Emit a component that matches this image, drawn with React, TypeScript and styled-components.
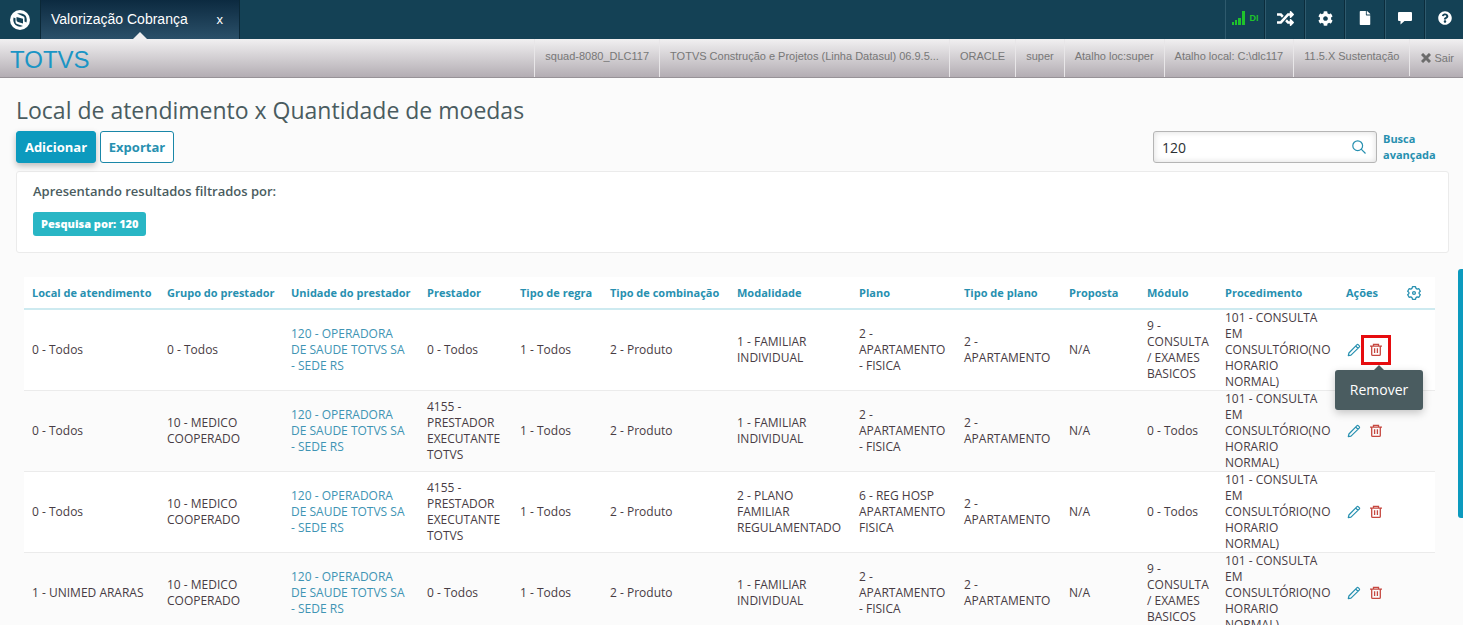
import React from "react";
import styled, { createGlobalStyle } from "styled-components";
import { FaRandom, FaCog, FaFile, FaQuestionCircle } from "react-icons/fa";

const UI = '"Open Sans", "Noto Sans", sans-serif';
const SYS = '"Liberation Sans", Arial, sans-serif';

const GlobalStyle = createGlobalStyle`
  * { box-sizing: border-box; }
  body { margin: 0; background: #fbfbfb; font-family: ${UI}; color: #4a5c60; }
  button, input { font-family: inherit; margin: 0; }
  a { text-decoration: none; }
`;

const Page = styled.div`
  height: 100vh;
  overflow: hidden;
  position: relative;
  display: flex;
  flex-direction: column;
`;

const TopBar = styled.header`
  flex: none;
  display: flex;
  height: 39px;
  background: #144155;
  font-family: ${SYS};
  color: #fff;
`;

const Home = styled.button`
  width: 40px;
  border: 0;
  padding: 0;
  background: none;
  display: flex;
  align-items: center;
  justify-content: center;
`;

const Tab = styled.div`
  position: relative;
  width: 200px;
  display: flex;
  align-items: center;
  justify-content: space-between;
  padding: 0 16px 1px 10px;
  border-left: 1px solid #0b2837;
  border-right: 1px solid #0b2837;
  background: linear-gradient(#0c2a40, #2b5069);
  font-size: 14px;
  &::after {
    content: "";
    position: absolute;
    bottom: 0;
    left: 50%;
    margin-left: -7px;
    border: 7px solid transparent;
    border-top: 0;
    border-bottom-color: #f0eff0;
  }
`;

const TabClose = styled.button`
  border: 0;
  padding: 0;
  background: none;
  color: #fff;
  font-size: 13px;
`;

const Tools = styled.nav`
  margin-left: auto;
  margin-right: -2px;
  display: flex;
`;

const Tool = styled.button`
  width: 40px;
  padding: 0 0 3px;
  border: 0;
  border-left: 1px solid #2f5a6d;
  border-right: 1px solid #0b2c3c;
  background: none;
  color: #fff;
  display: flex;
  align-items: center;
  justify-content: center;
  gap: 4px;
`;

const Signal = styled.span`
  color: #1fc32b;
  font-size: 9px;
  font-weight: 700;
`;

const InfoBar = styled.div`
  flex: none;
  display: flex;
  height: 39px;
  background: linear-gradient(#f1f0f1, #b3adb3);
  border-bottom: 1px solid #979297;
  font-family: ${SYS};
  font-size: 11px;
  line-height: 16px;
  color: #777;
`;

const Brand = styled.div`
  flex: 1;
  padding-left: 10px;
  font-size: 24px;
  line-height: 42px;
  color: #1b95c5;
`;

const Info = styled.div`
  padding: 9px 10px 0;
  border-left: 1px solid #e8e6e8;
  white-space: nowrap;
`;

const Exit = styled.a`
  display: flex;
  gap: 3px;
  align-items: center;
  height: 37px;
  padding: 0 9px 0 11px;
  border-left: 1px solid #e8e6e8;
  color: #777;
`;

const Main = styled.main`
  flex: none;
  padding: 16px 14px 0 16px;
`;

const Title = styled.h1`
  margin: 0;
  font-size: 23px;
  line-height: 32px;
  font-weight: 400;
  color: #4a5c60;
`;

const Actions = styled.div`
  display: flex;
  gap: 4px;
  margin-top: 5px;
  padding-right: 10px;
  height: 32px;
`;

const Button = styled.button<{ $primary?: boolean }>`
  width: ${(p) => (p.$primary ? 80 : 74)}px;
  padding: 0;
  border: 1px solid ${(p) => (p.$primary ? "#0c9abe" : "#1a87a8")};
  border-radius: 3px;
  background: ${(p) => (p.$primary ? "#0c9abe" : "#fff")};
  color: ${(p) => (p.$primary ? "#fff" : "#2790b0")};
  box-shadow: ${(p) => (p.$primary ? "0 3px 6px rgba(0,0,0,.25)" : "none")};
  font-size: 13px;
  font-weight: 700;
`;

const Search = styled.form`
  margin-left: auto;
  display: flex;
  align-items: center;
  width: 224px;
  padding-right: 10px;
  border: 1px solid #b5b5b5;
  border-radius: 3px;
  background: #fff;
  box-shadow: inset 0 0 6px rgba(0, 0, 0, 0.14);
`;

const SearchInput = styled.input`
  flex: 1;
  min-width: 0;
  border: 0;
  outline: 0;
  padding: 0 8px;
  background: none;
  font-size: 14px;
  color: #2c3133;
`;

const IconButton = styled.button<{ $color?: string }>`
  padding: 0;
  border: 0;
  background: none;
  display: flex;
  color: ${(p) => p.$color || "#2790b0"};
`;

const Advanced = styled.a`
  width: 56px;
  margin-left: 2px;
  font-size: 11px;
  line-height: 16px;
  font-weight: 700;
  color: #2790b0;
`;

const Filters = styled.section`
  margin-top: 8px;
  height: 82px;
  padding: 9px 16px;
  border: 1px solid #ebebeb;
  border-radius: 3px;
  background: #fff;
`;

const FilterTitle = styled.div`
  font-size: 13px;
  line-height: 20px;
  font-weight: 600;
`;

const Tag = styled.span`
  display: inline-block;
  margin-top: 11px;
  padding: 0 8px;
  border-radius: 3px;
  background: #29b6c5;
  color: #fff;
  font-size: 11px;
  line-height: 24px;
  font-weight: 800;
`;

const Grid = styled.table`
  width: calc(100% - 22px);
  margin: 24px 0 0 8px;
  table-layout: fixed;
  border-spacing: 0;
  background: #fff;
  font-size: 12px;
  line-height: 16px;
`;

const Head = styled.th`
  height: 33px;
  padding: 0 0 0 8px;
  border-bottom: 2px solid #cdeaf0;
  text-align: left;
  white-space: nowrap;
  font-size: 11px;
  font-weight: 700;
  color: #2790b0;
`;

const Row = styled.tr`
  background: #fff;
  &:nth-child(even) { background: #fbfbfb; }
`;

const Cell = styled.td`
  height: 81px;
  padding: 0 0 0 8px;
  border-bottom: 1px solid #ebebeb;
  white-space: pre;
  color: #483c44;
`;

const UnitLink = styled.a`
  color: #4094b4;
`;

const RowActions = styled.div`
  display: flex;
  align-items: center;
  gap: 8px;
  padding-left: 1px;
`;

const Remove = styled.div<{ $active: boolean }>`
  position: relative;
  outline: ${(p) => (p.$active ? "3px solid #e60c0f" : "none")};
  outline-offset: 5px;
`;

const Tooltip = styled.div`
  position: absolute;
  top: 27px;
  left: 50%;
  width: 88px;
  margin-left: -41px;
  border-radius: 3px;
  background: #4a5c60;
  box-shadow: 0 3px 8px rgba(0, 0, 0, 0.22);
  color: #fff;
  font-size: 14px;
  line-height: 40px;
  text-align: center;
  &::before {
    content: "";
    position: absolute;
    left: 50%;
    top: -5px;
    margin-left: -5px;
    border: 5px solid transparent;
    border-top: 0;
    border-bottom-color: #4a5c60;
  }
`;

const ScrollThumb = styled.div`
  position: absolute;
  right: 0;
  top: 269px;
  width: 5px;
  height: 249px;
  border-radius: 3px 0 0 3px;
  background: #0c9abe;
`;

const Logo = () => (
  <svg width="20" height="20" viewBox="0 0 20 20">
    <circle cx="10" cy="10" r="10" fill="#fff" />
    <path d="M7 3.500q5-1 8 1.500 2.500 3 1.500 7.500l-2-1V8q0-1.500-1.500-1.800z" fill="#144155" />
    <path d="M3.500 7.500l2 .8v3.700q0 1.500 1.500 2l6 2q-4 1.700-7.500-1Q2.700 12 3.500 7.500z" fill="#144155" />
    <path d="M6.500 7l6.500 1.700v4.800L8 12q-1.500-.5-1.500-2z" fill="#144155" />
  </svg>
);

const SignalBars = () => (
  <svg width="14" height="14" viewBox="0 0 14 14" fill="#1fc32b">
    <path d="M0 11h2v3H0zM3 9h2v5H3zM6 7h3v7H6zM10 0h3v14h-3z" />
  </svg>
);

const Speech = () => (
  <svg width="14" height="14" viewBox="0 0 14 14" fill="#fff">
    <path d="M1 1h12q1 0 1 1v7q0 1-1 1H6.500L2.500 13.500V10H1q-1 0-1-1V2q0-1 1-1z" />
  </svg>
);

const Cross = () => (
  <svg width="10" height="10" viewBox="0 0 10 10" stroke="#6c6c6c" strokeWidth="3">
    <path d="M1 1l8 8M9 1l-8 8" />
  </svg>
);

const Lens = () => (
  <svg width="14" height="14" viewBox="0 0 14 14" fill="none" stroke="currentColor" strokeWidth="1.2">
    <circle cx="5.700" cy="5.700" r="4.900" />
    <path d="M9.200 9.200l4.300 4.300" />
  </svg>
);

const Gear = () => (
  <svg width="14" height="14" viewBox="0 0 14 14" fill="none" stroke="currentColor" strokeWidth="1.3" strokeLinejoin="round">
    <path d="M5.500 .7h3l.5 1.700 1.200.7 1.700-.4 1.400 2.500-1.200 1.200v1.200l1.200 1.200-1.400 2.500-1.700-.4-1.200.7-.5 1.700h-3L5 11.600l-1.200-.7-1.700.4L.7 8.800l1.200-1.200V6.400L.7 5.200l1.400-2.500 1.700.4L5 2.400z" />
    <circle cx="7" cy="7" r="1.400" />
  </svg>
);

const Pencil = () => (
  <svg width="14" height="14" viewBox="0 0 14 14" fill="none" stroke="currentColor" strokeWidth="1.2" strokeLinejoin="round">
    <path d="M1.300 12.700l.6-2.700 7.900-8.200q.8-.8 1.600 0l.8.800q.8.800 0 1.600l-8.200 7.900zM8.700 3l2.300 2.300" />
  </svg>
);

const Trash = () => (
  <svg width="14" height="14" viewBox="0 0 14 14" fill="none" stroke="currentColor" strokeWidth="1.3">
    <path d="M1 3.200h12M4.500 3.200V1.400h5v1.800M2.700 3.200v8.200q0 1 1 1h6.600q1 0 1-1V3.200M5.600 5.300v4.700M8.400 5.300v4.700" />
  </svg>
);

const columns: [string, number][] = [
  ["Local de atendimento", 135],
  ["Grupo do prestador", 124],
  ["Unidade do prestador", 136],
  ["Prestador", 93],
  ["Tipo de regra", 90],
  ["Tipo de combinação", 127],
  ["Modalidade", 122],
  ["Plano", 105],
  ["Tipo de plano", 105],
  ["Proposta", 78],
  ["Módulo", 78],
  ["Procedimento", 121],
  ["Ações", 61],
];

const unit = "120 - OPERADORA\nDE SAUDE TOTVS SA\n- SEDE RS";
const provider = "4155 -\nPRESTADOR\nEXECUTANTE\nTOTVS";
const procedure = "101 - CONSULTA\nEM\nCONSULTÓRIO(NO\nHORARIO\nNORMAL)";
const doctor = "10 - MEDICO\nCOOPERADO";
const individual = "1 - FAMILIAR\nINDIVIDUAL";
const flat = "2 -\nAPARTAMENTO";
const flatF = "2 -\nAPARTAMENTO\n- FISICA";
const exams = "9 -\nCONSULTA\n/ EXAMES\nBASICOS";
const all = "0 - Todos";

const rows = [
  [all, all, unit, all, "1 - Todos", "2 - Produto", individual, flatF, flat, "N/A", exams, procedure],
  [all, doctor, unit, provider, "1 - Todos", "2 - Produto", individual, flatF, flat, "N/A", all, procedure],
  [all, doctor, unit, provider, "1 - Todos", "2 - Produto", "2 - PLANO\nFAMILIAR\nREGULAMENTADO", "6 - REG HOSP\nAPARTAMENTO\nFISICA", flat, "N/A", all, procedure],
  ["1 - UNIMED ARARAS", doctor, unit, all, "1 - Todos", "2 - Produto", individual, flatF, flat, "N/A", exams, procedure],
];

export default function App() {
  return (
    <Page>
      <GlobalStyle />
      <TopBar>
        <Home aria-label="Início"><Logo /></Home>
        <Tab>
          Valorização Cobrança
          <TabClose aria-label="Fechar">x</TabClose>
        </Tab>
        <Tools>
          <Tool><SignalBars /><Signal>DI</Signal></Tool>
          <Tool aria-label="Alternar"><FaRandom size={17} /></Tool>
          <Tool aria-label="Configurações"><FaCog size={15} /></Tool>
          <Tool aria-label="Documentos"><FaFile size={14} /></Tool>
          <Tool aria-label="Mensagens"><Speech /></Tool>
          <Tool aria-label="Ajuda"><FaQuestionCircle size={14} /></Tool>
        </Tools>
      </TopBar>
      <InfoBar>
        <Brand>TOTVS</Brand>
        <Info>squad-8080_DLC117</Info>
        <Info>TOTVS Construção e Projetos (Linha Datasul) 06.9.5...</Info>
        <Info>ORACLE</Info>
        <Info>super</Info>
        <Info>Atalho loc:super</Info>
        <Info>Atalho local: C:\dlc117</Info>
        <Info>11.5.X Sustentação</Info>
        <Exit href="#"><Cross />Sair</Exit>
      </InfoBar>
      <Main>
        <Title>Local de atendimento x Quantidade de moedas</Title>
        <Actions>
          <Button $primary>Adicionar</Button>
          <Button>Exportar</Button>
          <Search>
            <SearchInput aria-label="Pesquisar" defaultValue="120" />
            <IconButton type="button" aria-label="Buscar"><Lens /></IconButton>
          </Search>
          <Advanced href="#">Busca avançada</Advanced>
        </Actions>
        <Filters>
          <FilterTitle>Apresentando resultados filtrados por:</FilterTitle>
          <Tag>Pesquisa por: 120</Tag>
        </Filters>
        <Grid>
          <colgroup>
            {columns.map(([name, width]) => <col key={name} width={width} />)}
            <col width={36} />
          </colgroup>
          <thead>
            <tr>
              {columns.map(([name]) => <Head key={name}>{name}</Head>)}
              <Head><IconButton aria-label="Colunas"><Gear /></IconButton></Head>
            </tr>
          </thead>
          <tbody>
            {rows.map((row, r) => (
              <Row key={r}>
                {row.map((text, c) => (
                  <Cell key={c}>{c === 2 ? <UnitLink href="#">{text}</UnitLink> : text}</Cell>
                ))}
                <Cell colSpan={2}>
                  <RowActions>
                    <IconButton aria-label="Editar"><Pencil /></IconButton>
                    <Remove $active={r === 0}>
                      <IconButton $color="#c64840" aria-label="Remover"><Trash /></IconButton>
                      {r === 0 && <Tooltip role="tooltip">Remover</Tooltip>}
                    </Remove>
                  </RowActions>
                </Cell>
              </Row>
            ))}
          </tbody>
        </Grid>
      </Main>
      <ScrollThumb />
    </Page>
  );
}
